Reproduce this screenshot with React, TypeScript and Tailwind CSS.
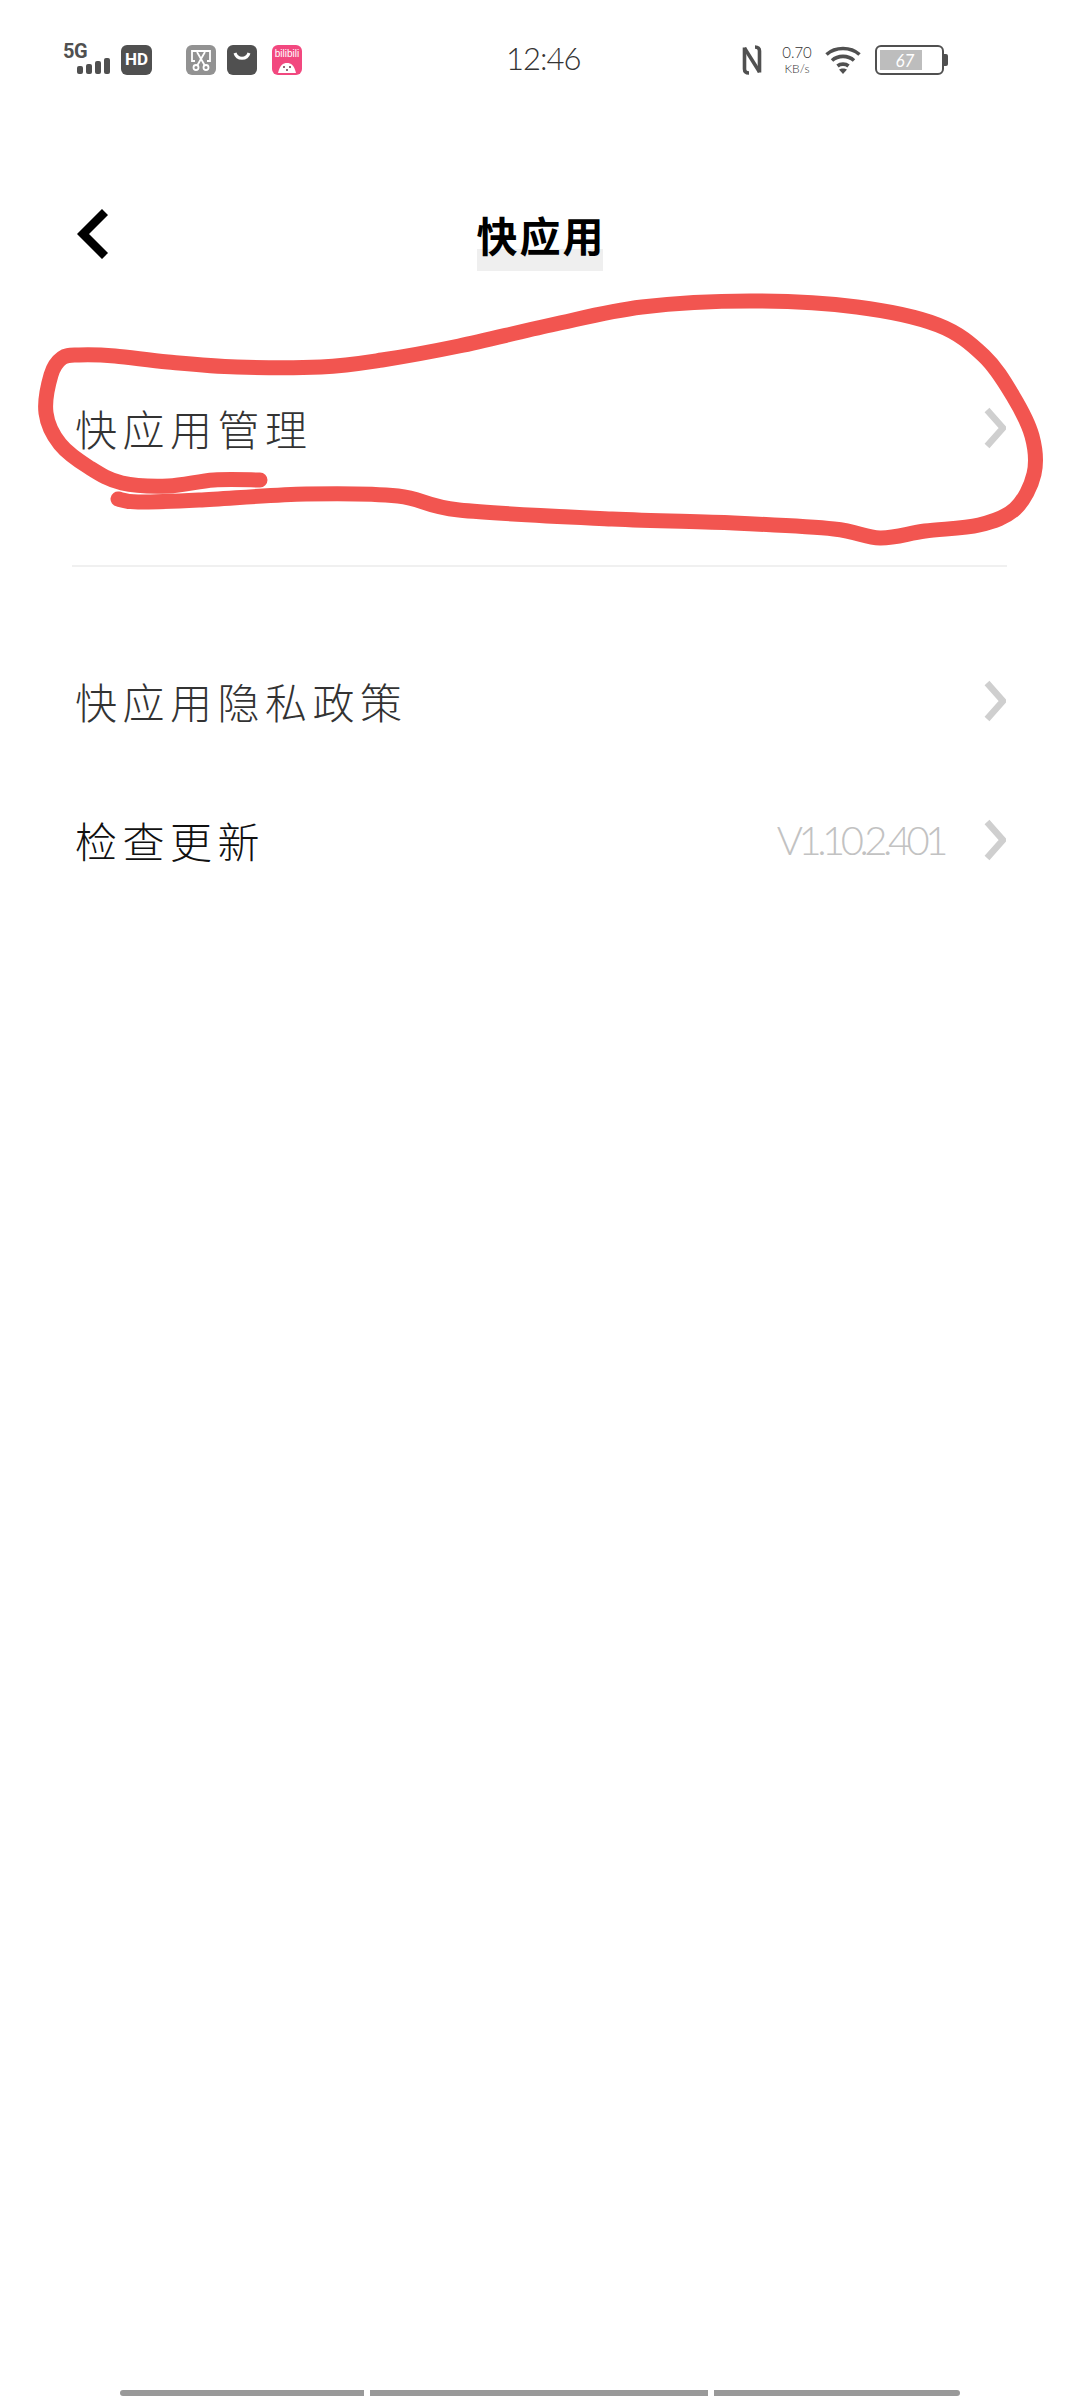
const CJK = "font-['Noto_Sans_CJK_SC','Noto_Sans_CJK_JP',sans-serif]";

// hand-drawn circle, points traced from the screenshot
const SCRIBBLE: [number, number][] = [
  [260, 480], [214, 480], [168, 486], [122, 483], [90, 468], [60, 444], [46, 413], [51, 375], [62, 358], [79, 355],
  [115, 356], [168, 362], [237, 367], [321, 367], [382, 360], [459, 346], [551, 325], [642, 307], [750, 301], [857, 307],
  [938, 325], [984, 356], [1013, 396], [1032, 436], [1034, 474], [1015, 509], [979, 525], [925, 531], [880, 538], [834, 529],
  [734, 523], [612, 519], [459, 510], [398, 496], [306, 494], [199, 500], [138, 502], [118, 499],
];

function smoothPath(pts: [number, number][]) {
  let d = `M${pts[0][0]} ${pts[0][1]}`;
  for (let i = 0; i < pts.length - 1; i++) {
    const p0 = pts[Math.max(i - 1, 0)];
    const p1 = pts[i];
    const p2 = pts[i + 1];
    const p3 = pts[Math.min(i + 2, pts.length - 1)];
    const c1x = p1[0] + (p2[0] - p0[0]) / 6;
    const c1y = p1[1] + (p2[1] - p0[1]) / 6;
    const c2x = p2[0] - (p3[0] - p1[0]) / 6;
    const c2y = p2[1] - (p3[1] - p1[1]) / 6;
    d += ` C${c1x} ${c1y} ${c2x} ${c2y} ${p2[0]} ${p2[1]}`;
  }
  return d;
}

const RowChevron = () => (
  <svg width="22" height="42" viewBox="0 0 22 42" fill="none" className="shrink-0">
    <path d="M3 3 L19 21 L3 39" stroke="#cfcfcf" strokeWidth="6.5" />
  </svg>
);

const Row = ({ label, dark, value, className }: { label: string; dark?: boolean; value?: string; className: string }) => (
  <div className={`flex items-center pl-[75px] pr-[74px] ${className}`}>
    <span className={`${CJK} text-[42px] leading-none tracking-[5.5px] font-light ${dark ? "text-[#111]" : "text-[#333]"}`}>{label}</span>
    {value && (
      <span className="ml-auto mr-[40px] font-['Lato',sans-serif] font-light text-[40px] leading-none tracking-[-4.5px] text-[#c2c2c2]">{value}</span>
    )}
    <span className={value ? "" : "ml-auto"}>
      <RowChevron />
    </span>
  </div>
);

const StatusBar = () => (
  <div className="flex items-center h-[120px] pl-[63px] pr-[132px] text-[#505050]">
    <div className="flex flex-col w-[47px] h-[30px] -mt-[2px]">
      <span className="font-['Roboto',sans-serif] font-bold text-[20px] leading-[15px] -tracking-[0.5px]">5G</span>
      <div className="flex items-end justify-end gap-[3px] h-[15px]">
        <span className="w-[6px] h-[8px] rounded-[2px] bg-[#505050]" />
        <span className="w-[6px] h-[10px] rounded-[2px] bg-[#505050]" />
        <span className="w-[6px] h-[13px] rounded-[2px] bg-[#505050]" />
        <span className="w-[6px] h-[16px] rounded-[2px] bg-[#505050]" />
      </div>
    </div>
    <div className="ml-[11px] flex items-center justify-center w-[31px] h-[30px] rounded-[6px] bg-[#505050] text-white font-['Roboto',sans-serif] font-bold text-[17px]">
      HD
    </div>
    <div className="ml-[34px] flex items-center justify-center w-[30px] h-[30px] rounded-[6px] bg-[#929292]">
      <svg width="24" height="24" viewBox="0 0 24 24" fill="none" stroke="#fff" strokeWidth="1.8">
        <path d="M6 13 L3 13 L3 3 L21 3 L21 13 L18 13" />
        <path d="M8 4 L15.5 17 M16 4 L8.5 17" />
        <circle cx="7" cy="19.5" r="2.5" />
        <circle cx="17" cy="19.5" r="2.5" />
      </svg>
    </div>
    <div className="ml-[11px] flex justify-center w-[30px] h-[30px] rounded-[6px] bg-[#505050]">
      <svg width="18" height="12" viewBox="0 0 18 12" fill="none" className="mt-[6px]">
        <path d="M2 2 C4 9 14 9 16 2" stroke="#fff" strokeWidth="3" />
      </svg>
    </div>
    <div className="ml-[15px] flex flex-col items-center w-[30px] h-[30px] rounded-[6px] bg-[#f2487f] overflow-hidden">
      <span className="font-['Liberation_Sans',sans-serif] text-[10px] leading-[14px] mt-[2px] text-white whitespace-nowrap">bilibili</span>
      <svg width="20" height="12" viewBox="0 0 20 12">
        <path d="M1 12 C3 4 6 2 10 2 C14 2 17 4 19 12 Z" fill="#fff" />
        <circle cx="7" cy="6" r="1" fill="#6b3a4c" />
        <circle cx="13" cy="6" r="1" fill="#6b3a4c" />
        <circle cx="10" cy="9" r="1" fill="#6b3a4c" />
      </svg>
    </div>

    <span className="ml-[204px] -mt-[4px] font-['Lato',sans-serif] font-light text-[31px] leading-none tracking-[-1px] text-[#333]">12:46</span>

    <div className="ml-auto flex items-center">
      {/* NFC mark */}
      <svg width="20" height="30" viewBox="0 0 20 30" fill="none" stroke="#505050" strokeWidth="3.6">
        <path d="M2.5 2.5 L2.5 24 C2.5 26.5 4 28 7 28" />
        <path d="M2.5 3 L17.5 27" />
        <path d="M17.5 27.5 L17.5 6 C17.5 3.5 16 2 13 2" />
      </svg>
      <div className="ml-[21px] flex flex-col items-center w-[28px] font-['Lato',sans-serif] font-light text-[#333]">
        <span className="text-[15px] leading-[16px] whitespace-nowrap">0.70</span>
        <span className="text-[12px] leading-[14px] whitespace-nowrap mt-[2px]">KB/s</span>
      </div>
      <svg width="36" height="28" viewBox="0 0 36 28" fill="none" stroke="#505050" strokeWidth="3.6" className="ml-[14px]">
        <path d="M1.5 8.5 C10.5 0.5 25.5 0.5 34.5 8.5" />
        <path d="M7 14.5 C13 9 23 9 29 14.5" />
        <path d="M12.5 20 C15.5 17.5 20.5 17.5 23.5 20" />
        <path d="M18 28 L14 23.5 C16 22 20 22 22 23.5 Z" fill="#505050" stroke="none" />
      </svg>
      <div className="ml-[14px] flex items-center">
        <div className="flex items-center w-[69px] h-[30px] rounded-[6px] border-2 border-[#505050] px-[3px]">
          <div className="flex items-center justify-center w-[42px] h-[20px] bg-[#bdbdbd] text-white font-['Lato',sans-serif] italic text-[17px] leading-none">
            <span className="ml-[8px]">67</span>
          </div>
        </div>
        <div className="w-[4px] h-[12px] rounded-r-[2px] bg-[#505050]" />
      </div>
    </div>
  </div>
);

export default function App() {
  return (
    <div className="relative w-[1080px] h-[2400px] bg-white overflow-hidden">
      <StatusBar />

      <div className="grid grid-cols-[1fr_auto_1fr] items-center h-[228px] pl-[77px] pr-[78px]">
        <svg width="32" height="50" viewBox="0 0 32 50" fill="none">
          <path d="M28 3 L6 25 L28 47" stroke="#000" strokeWidth="8.5" />
        </svg>
        <div className="relative w-[126px]">
          <div className="absolute left-0 right-0 top-[38px] h-[22px] bg-[#efefef]" />
          <span className={`relative block ${CJK} font-bold text-[41px] leading-[46px] tracking-[2px] text-black whitespace-nowrap`}>快应用</span>
        </div>
        <div />
      </div>

      <Row label="快应用管理" className="h-[160px]" />
      <div className="mt-[57px] ml-[72px] mr-[73px] h-[2px] bg-[#f0f0f0]" />
      <Row label="快应用隐私政策" className="mt-[65px] h-[138px]" />
      <Row label="检查更新" dark value="V1.10.2.401" className="h-[140px]" />

      {/* red pen annotation on top of the screenshot */}
      <svg className="absolute inset-0 pointer-events-none" width="1080" height="2400" fill="none">
        <path d={smoothPath(SCRIBBLE)} stroke="#f25550" strokeWidth="15" strokeLinecap="round" strokeLinejoin="round" />
      </svg>

      <div className="absolute left-[120px] right-[120px] bottom-[4px] flex gap-[6px] h-[6px]">
        <div className="w-[244px] bg-[#999] rounded-l-full" />
        <div className="w-[338px] bg-[#999]" />
        <div className="flex-1 bg-[#999] rounded-r-full" />
      </div>
    </div>
  );
}
